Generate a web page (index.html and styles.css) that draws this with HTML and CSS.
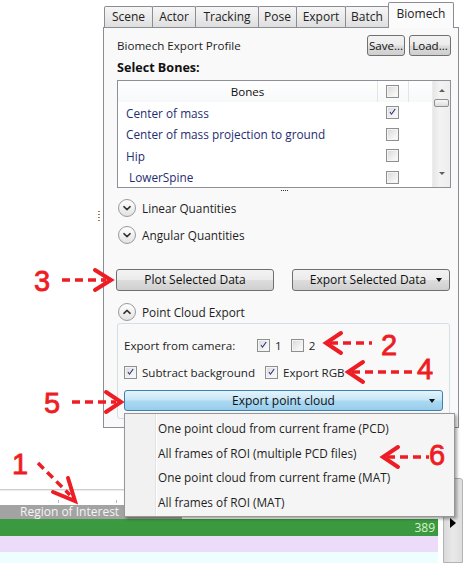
FILE: index.html
```html
<!DOCTYPE html>
<html>
<head>
<meta charset="utf-8">
<link rel="stylesheet" href="styles.css">
</head>
<body>
<div class="app">
  <div class="top">
    <div class="gutter"><div class="grip"></div></div>
    <div class="tabctl">
      <div class="tabs">
        <div class="tab t1">Scene</div>
        <div class="tab t2">Actor</div>
        <div class="tab t3">Tracking</div>
        <div class="tab t4">Pose</div>
        <div class="tab t5">Export</div>
        <div class="tab t6">Batch</div>
        <div class="tab t7 active">Biomech</div>
      </div>
      <div class="panel">
        <div class="profile-row">
          <span>Biomech Export Profile</span>
          <div class="profile-btns">
            <div class="btn save">Save...</div>
            <div class="btn load">Load...</div>
          </div>
        </div>
        <div class="section-title">Select Bones:</div>
        <div class="listbox">
          <div class="grid">
            <div class="hdr">
              <div class="c-name hc">Bones</div>
              <div class="c-chk hc"><span class="cb"></span></div>
              <div class="c-fill"></div>
            </div>
            <div class="row"><div class="c-name">Center of mass</div><div class="c-chk"><span class="cb"><svg viewBox="0 0 13 13" class="tick"><path d="M3 6.2 L5.3 9.6 L10.2 2.6 L9.2 2.2 L5.2 7.8 L4.1 5.6 Z"/></svg></span></div></div>
            <div class="row"><div class="c-name">Center of mass projection to ground</div><div class="c-chk"><span class="cb"></span></div></div>
            <div class="row"><div class="c-name">Hip</div><div class="c-chk"><span class="cb"></span></div></div>
            <div class="row"><div class="c-name indent">LowerSpine</div><div class="c-chk"><span class="cb"></span></div></div>
          </div>
          <div class="vscroll">
            <div class="arr up"></div>
            <div class="thumb"></div>
            <div class="arr down"></div>
          </div>
        </div>
        <div class="splitter"><div class="dots"></div></div>
        <div class="expander first">
          <span class="exp-btn"><svg viewBox="0 0 18 18"><path d="M5.5 7.5 L9 10.8 L12.5 7.5"/></svg></span>
          <span>Linear Quantities</span>
        </div>
        <div class="expander second">
          <span class="exp-btn"><svg viewBox="0 0 18 18"><path d="M5.5 7.5 L9 10.8 L12.5 7.5"/></svg></span>
          <span>Angular Quantities</span>
        </div>
        <div class="btn-row">
          <div class="btn wide">Plot Selected Data</div>
          <div class="btn wide drop">Export Selected Data <span class="caret"></span></div>
        </div>
        <div class="expander third">
          <span class="exp-btn"><svg viewBox="0 0 18 18"><path d="M5.5 10.5 L9 7.2 L12.5 10.5"/></svg></span>
          <span>Point Cloud Export</span>
        </div>
        <div class="group">
          <div class="g-row r1">
            <span class="cam-label">Export from camera:</span>
            <span class="cb"><svg viewBox="0 0 13 13" class="tick"><path d="M3 6.2 L5.3 9.6 L10.2 2.6 L9.2 2.2 L5.2 7.8 L4.1 5.6 Z"/></svg></span>
            <span class="cb-text">1</span>
            <span class="cb cam2"></span>
            <span class="cb-text">2</span>
          </div>
          <div class="g-row r2">
            <span class="cb"><svg viewBox="0 0 13 13" class="tick"><path d="M3 6.2 L5.3 9.6 L10.2 2.6 L9.2 2.2 L5.2 7.8 L4.1 5.6 Z"/></svg></span>
            <span class="cb-text">Subtract background</span>
            <span class="cb rgb"><svg viewBox="0 0 13 13" class="tick"><path d="M3 6.2 L5.3 9.6 L10.2 2.6 L9.2 2.2 L5.2 7.8 L4.1 5.6 Z"/></svg></span>
            <span class="cb-text">Export RGB</span>
          </div>
          <div class="btn blue">Export point cloud<span class="caret"></span></div>
        </div>
      </div>
    </div>
  </div>
  <div class="timeline">
    <div class="tracks">
      <div class="ruler"><span class="tick-mark tk1"></span><span class="tick-mark tk2"></span></div>
      <div class="roi"><div class="roi-label">Region of Interest</div></div>
      <div class="track green"><span>389</span></div>
      <div class="track lav"></div>
      <div class="track cyan"></div>
    </div>
    <div class="hscroll"><span class="play"></span></div>
  </div>

  <div class="menu">
    <div class="menu-item">One point cloud from current frame (PCD)</div>
    <div class="menu-item">All frames of ROI (multiple PCD files)</div>
    <div class="menu-item">One point cloud from current frame (MAT)</div>
    <div class="menu-item">All frames of ROI (MAT)</div>
  </div>

  <svg class="annot" viewBox="0 0 466 563" width="466" height="563">
    <g class="dash">
      <line x1="38" y1="463" x2="70" y2="495"/>
      <line x1="62" y1="280" x2="106" y2="280"/>
      <line x1="72" y1="402" x2="116" y2="402"/>
      <line x1="330" y1="343" x2="372" y2="343"/>
      <line x1="352" y1="372" x2="416" y2="372"/>
      <line x1="387" y1="457" x2="429" y2="457"/>
    </g>
    <g class="head">
      <polyline points="53,492 75,501 68,478"/>
      <polyline points="95,270 111,280 95,290"/>
      <polyline points="106,392 121,402 106,412"/>
      <polyline points="341,333 326,343 341,353"/>
      <polyline points="363,362 348,372 363,382"/>
      <polyline points="398,447 383,457 398,467"/>
    </g>
    <g class="num">
      <text x="12" y="474">1</text>
      <text x="381" y="355">2</text>
      <text x="34" y="291">3</text>
      <text x="417" y="379">4</text>
      <text x="44" y="413">5</text>
      <text x="429" y="465">6</text>
    </g>
  </svg>
</div>
</body>
</html>
```

FILE: styles.css
```css
* { box-sizing: border-box; }
body {
  margin: 0;
  width: 466px;
  height: 563px;
  overflow: hidden;
  background: #fff;
  font-family: "Open Sans", "Noto Sans", sans-serif;
  font-size: 11.6px;
  color: #1e1e1e;
}
.app { position: relative; width: 466px; height: 563px; }

.top { display: flex; height: 478px; }
.gutter { width: 103px; flex: none; }
.grip {
  margin: 211px 0 0 98px;
  width: 2px;
  height: 11px;
  background: repeating-linear-gradient(to bottom, #9b7b4d 0 1px, transparent 1px 3px);
}

.tabctl { width: 356px; flex: none; }
.tabs {
  display: flex;
  align-items: flex-end;
  height: 27px;
  padding-left: 1px;
  position: relative;
  z-index: 2;
}
.tab {
  height: 21px;
  border: 1px solid #8a8d94;
  border-bottom: none;
  margin-right: -1px;
  background: linear-gradient(#f6f6f6, #ebebeb 50%, #dedede);
  text-align: center;
  line-height: 19px;
  color: #222;
  font-size: 12px;
  border-radius: 2px 2px 0 0;
  white-space: nowrap;
}
.t1 { width: 49px; }
.t2 { width: 44px; }
.t3 { width: 64px; }
.t4 { width: 39px; }
.t5 { width: 50px; }
.t6 { width: 44px; }
.t7 { width: 66px; }
.tab.active {
  height: 26px;
  margin-bottom: -1px;
  background: #fbfbfb;
  line-height: 21px;
  position: relative;
}

.panel {
  height: 401px;
  border: 1px solid #8a8d94;
  background: #f9f9f9;
  padding: 7px 7px 0 13px;
}

.profile-row {
  display: flex;
  align-items: center;
  justify-content: space-between;
  height: 21px;
}
.profile-btns { display: flex; gap: 4px; }

.btn {
  height: 21px;
  border: 1px solid #707070;
  border-radius: 3px;
  background: linear-gradient(#f3f3f3, #ebebeb 49%, #dddddd 51%, #cfcfcf);
  text-align: center;
  line-height: 19px;
  color: #111;
  font-size: 12px;
  white-space: nowrap;
  position: relative;
}
.save { width: 38px; font-size: 11.6px; }
.load { width: 42px; font-size: 11.6px; }

.section-title {
  margin-top: 4px;
  line-height: 16px;
  font-weight: 700;
  font-size: 12.6px;
  color: #111;
}

.listbox {
  margin-top: 4px;
  width: 334px;
  height: 108px;
  border: 1px solid #8d9096;
  display: flex;
  background: #fff;
}
.grid { flex: 1; }
.hdr {
  display: flex;
  height: 21px;
  background: linear-gradient(#ffffff, #f7f8f9);
}
.hdr .hc { border-right: 1px solid #e3e4e6; }
.c-name { width: 260px; }
.c-chk { width: 31px; padding-left: 8px; display: flex; align-items: center; }
.c-fill { width: 23px; }
.hdr .c-name { text-align: center; line-height: 21px; color: #111; }
.row { display: flex; height: 21.5px; align-items: center; }
.row .c-name { padding-left: 8px; color: #1f2d72; font-size: 11.8px; }
.row .c-name.indent { padding-left: 11px; }

.cb {
  width: 13px;
  height: 13px;
  border: 1px solid #8e8f8f;
  background: linear-gradient(135deg, #d8d8d8, #f4f4f4 70%, #ffffff);
  box-shadow: inset 0 0 0 1px #f4f4f4;
  display: inline-flex;
  flex: none;
}
.tick { width: 11px; height: 11px; fill: #242a74; }

.vscroll {
  width: 18px;
  background: linear-gradient(to right, #e6e6e6, #f3f3f3 40%, #ededed);
  border-left: 1px solid #ececec;
  display: flex;
  flex-direction: column;
  align-items: center;
}
.arr { width: 0; height: 0; border-left: 3px solid transparent; border-right: 3px solid transparent; }
.arr.up { margin-top: 8px; border-bottom: 3px solid #606060; }
.arr.down { margin-top: auto; margin-bottom: 12px; border-top: 3px solid #606060; }
.thumb {
  margin-top: 7px;
  width: 15px;
  height: 8px;
  border: 1px solid #8f8f8f;
  border-radius: 2px;
  background: linear-gradient(#f8f8f8, #dcdcdc);
}

.splitter { height: 10px; width: 334px; display: flex; justify-content: center; }
.dots {
  margin-top: 2px;
  width: 7px;
  height: 1px;
  background: repeating-linear-gradient(to right, #333 0 1px, transparent 1px 2px);
}

.expander {
  display: flex;
  align-items: center;
  height: 18px;
  gap: 6px;
  padding-left: 1px;
  font-size: 11.8px;
  color: #1e1e1e;
}
.expander.first { margin-top: 1px; }
.expander.second { margin-top: 9px; }
.expander.third { margin-top: 12px; }
.exp-btn {
  width: 18px;
  height: 18px;
  border-radius: 50%;
  border: 1px solid #9a9a9a;
  background: linear-gradient(#ffffff, #f1f1f1 50%, #e2e2e2);
  display: inline-flex;
}
.exp-btn svg { width: 16px; height: 16px; }
.exp-btn path { fill: none; stroke: #333; stroke-width: 1.7; stroke-linecap: round; stroke-linejoin: round; }

.btn-row { display: flex; gap: 18px; margin-top: 25px; margin-left: -1px; }
.btn.wide { width: 158px; height: 22px; line-height: 20px; }
.btn.drop { padding-right: 6px; }
.caret {
  position: absolute;
  right: 7px;
  top: 8px;
  width: 0;
  height: 0;
  border-left: 3.5px solid transparent;
  border-right: 3.5px solid transparent;
  border-top: 4px solid #111;
}

.group {
  margin-top: 2px;
  width: 333px;
  height: 96px;
  border: 1px solid #d5dfe5;
  border-radius: 3px;
  padding: 12px 6px 0 6px;
}
.g-row { display: flex; align-items: center; height: 18px; }
.g-row.r2 { margin-top: 9px; }
.cam-label { width: 133px; }
.cb-text { margin-left: 5px; }
.cb.cam2 { margin-left: 9px; }
.cb.rgb { margin-left: 10px; }
.btn.blue {
  margin-top: 9px;
  width: 319px;
  border-color: #3c7fb1;
  background: linear-gradient(#e5f4fc, #c4e5f6 49%, #acd9f2 51%, #98cdec);
}

.timeline { display: flex; height: 85px; }
.tracks { width: 443px; }
.ruler {
  height: 27px;
  position: relative;
  background: linear-gradient(to bottom, transparent 11px, #cfcfcf 11px, #cfcfcf 12px, #ececec 12px, #ececec 13px, transparent 13px);
}
.tick-mark {
  position: absolute;
  top: 22px;
  width: 1px;
  height: 3px;
  background: #b8b8b8;
}
.tk1 { left: 58px; }
.tk2 { left: 116px; }
.roi { height: 14px; }
.roi-label {
  width: 182px;
  height: 14px;
  background: #a3a3a3;
  color: #f4f4f4;
  padding-left: 20px;
  line-height: 14px;
  font-size: 12px;
  white-space: nowrap;
}
.track { width: 438px; }
.green {
  height: 17px;
  background: #3b9a3f;
  color: #dcf2cf;
  text-align: right;
  padding-right: 3px;
  line-height: 17px;
  font-size: 12px;
}
.lav { height: 16px; background: #ecdcf9; }
.cyan { height: 28px; background: #eefefe; }
.hscroll {
  width: 20px;
  position: relative;
  border: 1px solid #b3b3b3;
  border-radius: 2px 3px 0 0;
  background: linear-gradient(to right, #d9d9d9, #e9e9e9 50%, #dedede);
}
.play {
  position: absolute;
  left: 6px;
  top: 39px;
  width: 0;
  height: 0;
  border-top: 5px solid transparent;
  border-bottom: 5px solid transparent;
  border-left: 6px solid #000;
}

.menu {
  position: absolute;
  left: 124px;
  top: 413px;
  width: 331px;
  height: 104px;
  border: 1px solid #979797;
  background: linear-gradient(to right, #f1f1f1 0 30px, #e2e3e3 30px 31px, #ffffff 31px 32px, #f5f5f5 32px);
  box-shadow: 2px 2px 3px rgba(0, 0, 0, 0.35);
  padding-top: 2px;
  z-index: 5;
}
.menu-item {
  height: 24.5px;
  line-height: 24.5px;
  padding-left: 33px;
  color: #1e1e1e;
  font-size: 11.8px;
  white-space: nowrap;
}

.annot {
  position: absolute;
  left: 0;
  top: 0;
  z-index: 10;
  pointer-events: none;
}
.dash line { stroke: #ee1c24; stroke-width: 3.5; stroke-dasharray: 8 5; }
.head polyline { fill: none; stroke: #ee1c24; stroke-width: 4; stroke-linecap: round; stroke-linejoin: miter; }
.num text { fill: #ee1c24; stroke: #ee1c24; stroke-width: 0.8; font-family: "Liberation Sans", sans-serif; font-size: 29px; }
```
